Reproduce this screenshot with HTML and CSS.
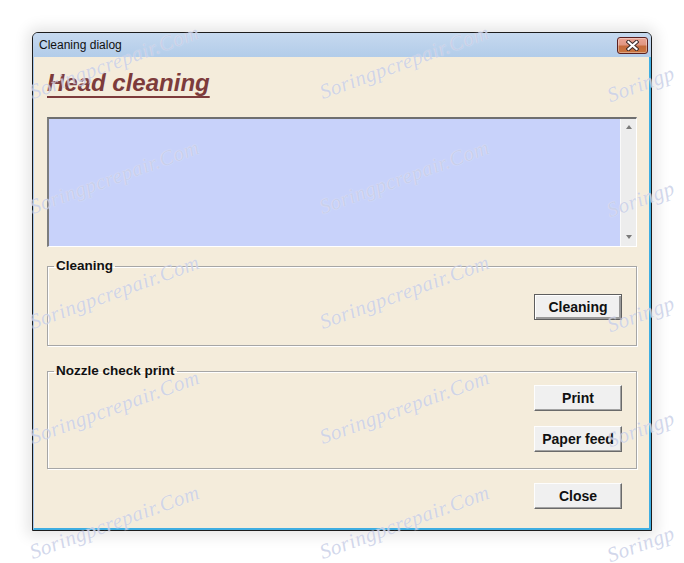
FILE: index.html
```html
<!DOCTYPE html>
<html lang="en">

<head>
    <meta charset="UTF-8">
    <meta name="viewport" content="width=device-width, initial-scale=1.0">
    <title>Cleaning dialog</title>
    <link rel="stylesheet" href="styles.css">
</head>

<body>
    <div class="window">
        <div class="titlebar">
            <span class="title">Cleaning dialog</span>
            <button class="close-x" aria-label="Close">
                <svg width="13" height="11" viewBox="0 0 13 11">
                    <path d="M2.5 2 L10.5 9 M10.5 2 L2.5 9" stroke="#3b2a2a" stroke-width="4.2" stroke-linecap="square" />
                    <path d="M2.5 2 L10.5 9 M10.5 2 L2.5 9" stroke="#ffffff" stroke-width="2.2" stroke-linecap="square" />
                </svg>
            </button>
        </div>

        <div class="client">
            <h1 class="heading">Head cleaning</h1>

            <div class="listbox">
                <div class="list-area"></div>
                <div class="scrollbar">
                    <span class="arrow arrow-up"></span>
                    <span class="arrow arrow-down"></span>
                </div>
            </div>

            <fieldset class="group group-cleaning">
                <legend>Cleaning</legend>
                <div class="group-buttons">
                    <button class="btn btn-default">Cleaning</button>
                </div>
            </fieldset>

            <fieldset class="group group-nozzle">
                <legend>Nozzle check print</legend>
                <div class="group-buttons">
                    <button class="btn">Print</button>
                    <button class="btn">Paper feed</button>
                </div>
            </fieldset>

            <div class="dialog-footer">
                <button class="btn">Close</button>
            </div>
        </div>
    </div>

    <div class="watermarks">
        <span>Soringpcrepair.Com</span><span>Soringpcrepair.Com</span><span class="wm-edge">Soringp</span>
        <span>Soringpcrepair.Com</span><span>Soringpcrepair.Com</span><span class="wm-edge">Soringp</span>
        <span>Soringpcrepair.Com</span><span>Soringpcrepair.Com</span><span class="wm-edge">Soringp</span>
        <span>Soringpcrepair.Com</span><span>Soringpcrepair.Com</span><span class="wm-edge">Soringp</span>
        <span>Soringpcrepair.Com</span><span>Soringpcrepair.Com</span><span class="wm-edge">Soringp</span>
    </div>
</body>

</html>
```

FILE: styles.css
```css
/* Page */
body {
    margin: 0;
    padding: 32px 0 0 32px;
    background-color: #fff;
    font-family: 'Liberation Sans', Arial, sans-serif;
    overflow: hidden;
    position: relative;
    height: 563px;
    box-sizing: border-box;
}

/* Window frame */
.window {
    width: 620px;
    box-sizing: border-box;
    border: 1px solid #1c1c1c;
    border-radius: 6px 6px 0 0;
    background-color: #b7cfeb;
    box-shadow: 0 0 14px 5px rgba(0, 0, 0, 0.10);
}

.titlebar {
    height: 24px;
    display: flex;
    align-items: flex-start;
    justify-content: space-between;
    padding: 0 3px 0 6px;
    border-radius: 5px 5px 0 0;
    background: linear-gradient(#c6d9ef, #b2cce9);
}

.title {
    font-size: 12px;
    line-height: 25px;
    color: #111;
}

.close-x {
    margin-top: 4px;
    width: 31px;
    height: 17px;
    padding: 0;
    border: 1px solid #5b2020;
    border-radius: 3px;
    background: linear-gradient(#eaa596 0%, #e09682 45%, #c46a3c 55%, #c9753f 100%);
    box-shadow: inset 0 0 0 1px rgba(255, 255, 255, 0.35);
    display: flex;
    align-items: center;
    justify-content: center;
}

.client {
    background-color: #f4ecdb;
    border-left: 1px solid #a9c8ec;
    border-right: 2px solid #3eaee2;
    border-bottom: 2px solid #3eaee2;
    padding: 12px 12px 19px 13px;
}

/* Heading */
.heading {
    margin: 0;
    font-size: 24px;
    line-height: 28px;
    font-weight: bold;
    font-style: italic;
    color: #7d3b3b;
    text-decoration: underline;
    text-decoration-thickness: 2px;
    text-underline-offset: 5px;
}

/* List box */
.listbox {
    margin-top: 20px;
    height: 130px;
    box-sizing: border-box;
    display: flex;
    border-top: 2px solid #6f6f6f;
    border-left: 2px solid #7d7d7d;
    border-right: 1px solid #fff;
    border-bottom: 1px solid #fff;
}

.list-area {
    flex: 1;
    background-color: #c8d2fa;
}

.scrollbar {
    width: 15px;
    background-color: #ededed;
    border-left: 1px solid #f9f9f9;
    display: flex;
    flex-direction: column;
    justify-content: space-between;
    align-items: center;
    padding: 6px 0 7px;
}

.arrow {
    width: 0;
    height: 0;
    border-left: 3px solid transparent;
    border-right: 3px solid transparent;
}

.arrow-up {
    border-bottom: 4px solid #7a7a7a;
}

.arrow-down {
    border-top: 4px solid #7a7a7a;
}

/* Group boxes */
.group {
    margin: 0;
    min-width: 0;
    padding: 0 14px 0 0;
    border: 1px solid #a6a6a6;
    box-shadow: 1px 1px 0 #fff, inset 1px 1px 0 #fff;
}

.group legend {
    margin-left: 6px;
    padding: 0 2px;
    font-size: 13.5px;
    line-height: 16px;
    font-weight: bold;
    color: #111;
}

.group-cleaning {
    margin-top: 11px;
    padding-top: 20px;
    padding-bottom: 25px;
}

.group-nozzle {
    margin-top: 17px;
    padding-top: 6px;
    padding-bottom: 16px;
}

.group-buttons {
    display: flex;
    flex-direction: column;
    align-items: flex-end;
    gap: 15px;
}

/* Buttons */
.btn {
    width: 88px;
    height: 26px;
    box-sizing: border-box;
    padding: 0;
    font-family: 'Liberation Sans', Arial, sans-serif;
    font-size: 14px;
    font-weight: bold;
    color: #111;
    background-color: #f0f0f0;
    border-top: 1px solid #fdfdfd;
    border-left: 1px solid #fdfdfd;
    border-right: 1px solid #6a6a6a;
    border-bottom: 1px solid #6a6a6a;
    box-shadow: inset -1px -1px 0 #a3a3a3;
}

.btn-default {
    border: 1px solid #5e5e5e;
    box-shadow: inset 1px 1px 0 #fff, inset -2px -2px 0 #9a9a9a;
}

.dialog-footer {
    margin-top: 14px;
    padding-right: 15px;
    display: flex;
    justify-content: flex-end;
}

/* Watermark overlay */
.watermarks {
    position: absolute;
    top: 5px;
    left: -30px;
    display: grid;
    grid-template-columns: 290px 290px 130px;
    grid-auto-rows: 115px;
    place-items: center;
    pointer-events: none;
}

.watermarks span {
    font-family: 'Liberation Serif', serif;
    font-style: italic;
    font-size: 21px;
    letter-spacing: 0.5px;
    color: rgba(165, 175, 215, 0.5);
    text-shadow: 0 0 1px rgba(255, 255, 255, 0.8);
    transform: rotate(-20deg);
    white-space: nowrap;
}

.watermarks .wm-edge {
    justify-self: start;
    margin-left: 56px;
    transform: translateY(22px) rotate(-20deg);
}
```
